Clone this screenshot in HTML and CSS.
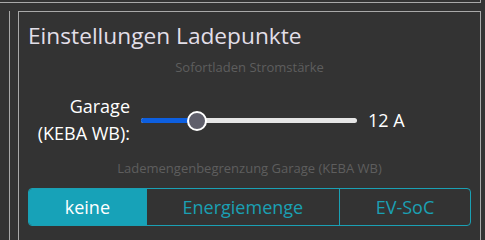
FILE: index.html
```html
<!DOCTYPE html>
<html lang="de">
<head>
  <meta charset="UTF-8">
  <meta name="viewport" content="width=device-width, initial-scale=1.0">
  <title>Einstellungen Ladepunkte</title>
  <link rel="stylesheet" href="styles.css">
</head>
<body>
  <div class="top-card"></div>

  <div class="layout">
    <div class="side-card"></div>

    <!-- Ladepunkt Einstellungen -->
    <div class="card">
      <h2>Einstellungen Ladepunkte</h2>

      <p class="hint">Sofortladen Stromstärke</p>
      <div class="slider-row">
        <label for="current">Garage<br>(KEBA WB):</label>
        <div class="slider">
          <div class="track"><div class="fill" style="width: 25.5%"></div></div>
          <div class="thumb" style="left: 25.5%"></div>
        </div>
        <span class="value">12 A</span>
      </div>

      <p class="hint">Lademengenbegrenzung Garage (KEBA WB)</p>
      <div class="btn-group">
        <button class="active">keine</button>
        <button>Energiemenge</button>
        <button>EV-SoC</button>
      </div>
    </div>
  </div>
</body>
</html>
```
FILE: styles.css
```css
body {
  margin: 0;
  background-color: #333;
  color: #fff;
  font-family: "Open Sans", "Noto Sans", sans-serif;
  overflow: hidden;
}
.top-card {
  width: 480px;
  height: 2px;
  border-bottom: 1px solid #a9a9a9;
  border-right: 1px solid #a9a9a9;
}
.layout {
  display: flex;
  gap: 8px;
  margin-top: 8px;
}
.side-card {
  width: 9px;
  height: 300px;
  border-right: 1px solid #a9a9a9;
}
.card {
  width: 443px;
  height: 300px;
  border: 1px solid #a9a9a9;
  padding: 0 9px;
}
h2 {
  margin: 9px 0 0;
  font-size: 22.7px;
  font-weight: 400;
  color: #e2dfe8;
  line-height: 30px;
}
.hint {
  margin: 7px 0 0;
  text-align: center;
  font-size: 13px;
  color: #5e5e5e;
  line-height: 18px;
}
.slider-row {
  display: flex;
  align-items: center;
  margin-top: 16px;
  height: 56px;
}
.slider-row label {
  width: 102px;
  text-align: right;
  font-size: 18px;
  line-height: 27px;
}
.slider {
  position: relative;
  width: 216px;
  margin-left: 11px;
  height: 20px;
}
.track {
  position: absolute;
  top: 8px;
  left: 0;
  right: 0;
  height: 5px;
  border-radius: 3px;
  background-color: #e6e6e6;
  overflow: hidden;
}
.fill {
  height: 100%;
  background-color: #0d5fe0;
}
.thumb {
  position: absolute;
  top: 1px;
  width: 16px;
  height: 16px;
  margin-left: -9px;
  border: 2px solid #fff;
  border-radius: 50%;
  background-color: #5f5f6b;
}
.value {
  margin-left: 11px;
  font-size: 18px;
}
.hint + .btn-group {
  margin-top: 11px;
}
.slider-row + .hint {
  margin-top: 11px;
}
.btn-group {
  display: flex;
  height: 36px;
  border: 1px solid #1aa0b4;
  border-radius: 4px;
  overflow: hidden;
}
.btn-group button {
  flex: 1 1 auto;
  background: none;
  border: none;
  border-left: 1px solid #1aa0b4;
  color: #1aa0b4;
  font-family: inherit;
  font-size: 18px;
  padding: 0;
}
.btn-group button:first-child {
  border-left: none;
}
.btn-group button.active {
  background-color: #17a2b8;
  color: #fff;
}
```
